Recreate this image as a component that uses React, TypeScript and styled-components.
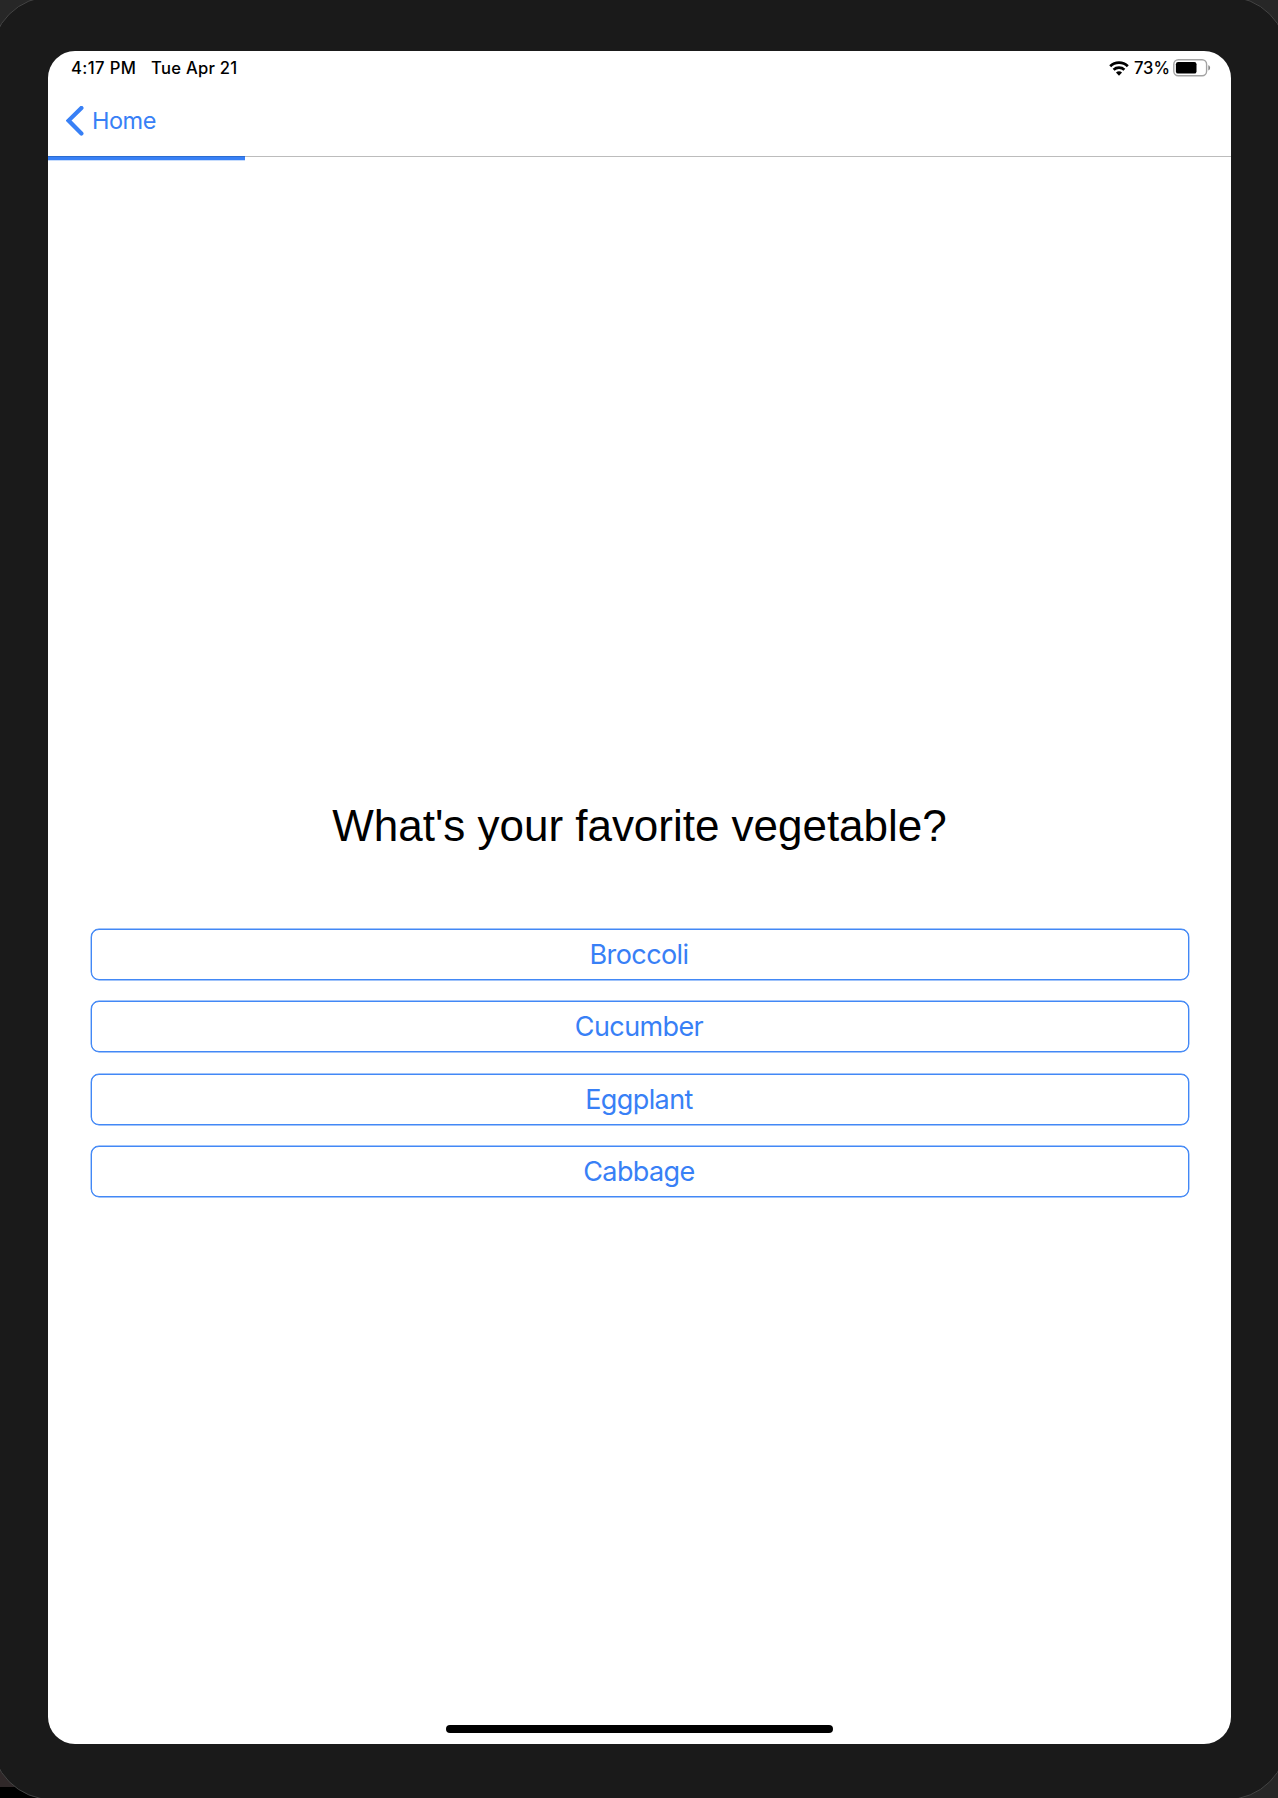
import React from "react";
import styled, { createGlobalStyle } from "styled-components";

const GlobalStyle = createGlobalStyle`
  *, *::before, *::after { box-sizing: border-box; }
  body { margin: 0; background: #242424; }
`;

const Backdrop = styled.div`
  width: 1278px;
  height: 1798px;
  overflow: hidden;
  display: flex;
  background: linear-gradient(90deg, #302829 0 30px, transparent 30px) 0 1700px / 100% 87px no-repeat,
    linear-gradient(90deg, #000 0 60px, transparent 60px) 0 1787px / 100% 11px no-repeat,
    #272727;
`;

const Bezel = styled.div`
  flex: none;
  width: 1297px;
  height: 1804px;
  margin: -4px 0 0 -9px;
  padding: 54px 56px;
  border: 1px solid #444;
  border-radius: 61px;
  background: #1a1a1a;
`;

const Screen = styled.main`
  display: flex;
  flex-direction: column;
  width: 1183px;
  height: 1693px;
  border-radius: 27px;
  background: #fff;
  overflow: hidden;
  font-family: Inter, "Liberation Sans", sans-serif;
  color: #000;
`;

const StatusBar = styled.div`
  display: flex;
  justify-content: space-between;
  height: 34px;
  padding: 0 20px 0 23px;
  font-size: 16.6px;
  font-weight: 500;
  line-height: 34px;
`;

const StatusGroup = styled.div<{ $gap: number }>`
  display: flex;
  align-items: center;
  gap: ${({ $gap }) => $gap}px;
`;

const StatusText = styled.span<{ $width: number; $tracking: number }>`
  width: ${({ $width }) => $width}px;
  letter-spacing: ${({ $tracking }) => $tracking}px;
  white-space: nowrap;
`;

const NavBar = styled.nav`
  display: flex;
  align-items: center;
  height: 71px;
  padding: 0 18px;
`;

const BackButton = styled.button`
  display: flex;
  align-items: center;
  gap: 8px;
  padding: 0;
  border: 0;
  background: none;
  color: #3880f6;
  font: 400 23.5px/30px Inter, sans-serif;
  letter-spacing: -0.5px;
`;

const ProgressTrack = styled.div`
  height: 5px;
  border-top: 1px solid #bcbcbc;
`;

const ProgressFill = styled.div`
  width: 197px;
  height: 5px;
  margin-top: -1px;
  background: linear-gradient(#2c6cd0 0 1px, #3880f6 1px 4px, #c6dcfd 4px);
`;

const Quiz = styled.section`
  flex: 1;
  display: flex;
  flex-direction: column;
  align-items: center;
  padding: 640px 42px 0 43px;
`;

const Question = styled.h1`
  margin: 0 1px 78px 0;
  font: 400 44px/50px "Liberation Sans", Arial, sans-serif;
  letter-spacing: -0.02px;
  white-space: nowrap;
`;

const Answers = styled.div`
  display: flex;
  flex-direction: column;
  gap: 21.3px;
  width: 100%;
`;

const Answer = styled.button`
  height: 51px;
  padding: 1px 2px 0 0;
  border: 1px solid #4288f6;
  border-radius: 8px;
  box-shadow: 0 0 0 0.4px #4288f6;
  background: #fff;
  color: #3880f6;
  font: 400 27px/48px Inter, sans-serif;
  letter-spacing: -0.6px;
`;

const HomeIndicator = styled.div`
  width: 387px;
  height: 8px;
  margin: 0 auto 11px;
  border-radius: 4px;
  background: #000;
`;

const ChevronIcon = () => (
  <svg width="18" height="30" viewBox="0 0 18 30" fill="none">
    <path d="M15.4 1.9 2.6 14.6l12.8 12.8" stroke="#3880f6" strokeWidth="4.2" strokeLinecap="round" strokeLinejoin="miter" />
  </svg>
);

const WifiIcon = () => (
  <svg width="20" height="15" viewBox="0 0 20 15" fill="none">
    <path d="M1.2 5.2C6 .4 14 .4 18.8 5.2M4.6 8.7c3-2.8 7.8-2.8 10.8 0" stroke="#000" strokeWidth="2.7" />
    <path d="M10 14.7 7 11.6c1.7-1.7 4.3-1.7 6 0z" fill="#000" />
  </svg>
);

const BatteryIcon = () => (
  <svg width="38" height="18" viewBox="0 0 38 18" fill="none">
    <rect x=".8" y=".8" width="32.8" height="16" rx="4.5" stroke="#a3a3a3" strokeWidth="1.4" />
    <rect x="2.9" y="3" width="20.6" height="11.6" rx="2.2" fill="#000" />
    <path d="M35.3 6.2c2.4.6 2.4 4.6 0 5.2z" fill="#888" />
  </svg>
);

const answers = ["Broccoli", "Cucumber", "Eggplant", "Cabbage"];

export default function App() {
  return (
    <>
      <GlobalStyle />
      <Backdrop>
        <Bezel>
          <Screen>
            <StatusBar>
              <StatusGroup $gap={15}>
                <StatusText $width={65} $tracking={0.4}>4:17 PM</StatusText>
                <StatusText $width={86} $tracking={0.28}>Tue Apr 21</StatusText>
              </StatusGroup>
              <StatusGroup $gap={5}>
                <WifiIcon />
                <StatusText $width={34} $tracking={-0.1}>73%</StatusText>
                <BatteryIcon />
              </StatusGroup>
            </StatusBar>
            <NavBar>
              <BackButton>
                <ChevronIcon />
                Home
              </BackButton>
            </NavBar>
            <ProgressTrack>
              <ProgressFill />
            </ProgressTrack>
            <Quiz>
              <Question>What's your favorite vegetable?</Question>
              <Answers>
                {answers.map((answer) => (
                  <Answer key={answer}>{answer}</Answer>
                ))}
              </Answers>
            </Quiz>
            <HomeIndicator />
          </Screen>
        </Bezel>
      </Backdrop>
    </>
  );
}
